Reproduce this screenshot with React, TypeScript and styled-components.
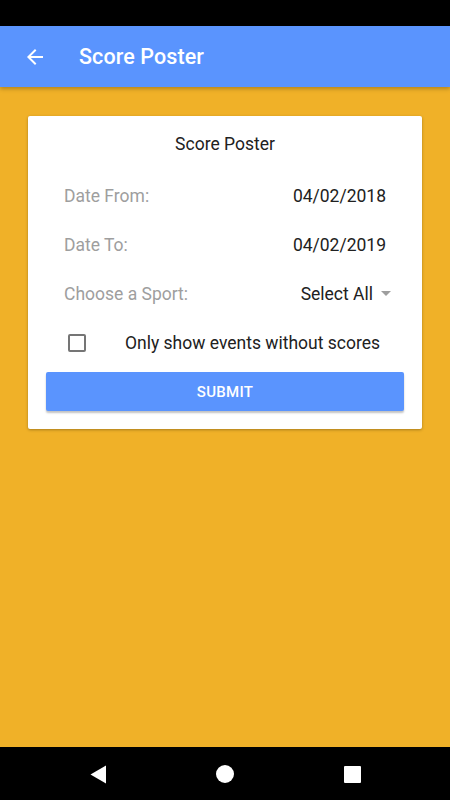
import React from 'react'
import styled, { createGlobalStyle } from 'styled-components'

const colors = {
  primary: '#5a94fe',
  background: '#f0b128',
  label: '#9e9e9e',
  text: '#212121',
  checkbox: '#757575'
}

const GlobalStyle = createGlobalStyle`
  html, body {
    margin: 0;
    padding: 0;
    background: #000;
  }
  body {
    font-family: Roboto, 'Noto Sans', sans-serif;
  }
`

export default function App() {
  return (
    <>
      <GlobalStyle />
      <Screen>
        <StatusBar />
        <AppBar>
          <BackButton aria-label="back">
            <svg width="24" height="24" viewBox="0 0 24 24">
              <path
                d="M20 11H7.83l5.59-5.59L12 4l-8 8 8 8 1.41-1.41L7.83 13H20v-2z"
                fill="#fff"
              />
            </svg>
          </BackButton>
          <AppBarTitle>Score Poster</AppBarTitle>
        </AppBar>
        <Content>
          <Card>
            <CardTitle>Score Poster</CardTitle>
            <FieldRow>
              <FieldLabel>Date From:</FieldLabel>
              <FieldValue>04/02/2018</FieldValue>
            </FieldRow>
            <FieldRow>
              <FieldLabel>Date To:</FieldLabel>
              <FieldValue>04/02/2019</FieldValue>
            </FieldRow>
            <FieldRow>
              <FieldLabel>Choose a Sport:</FieldLabel>
              <SelectValue>
                Select All
                <Caret />
              </SelectValue>
            </FieldRow>
            <CheckRow>
              <CheckBox />
              <CheckLabel>Only show events without scores</CheckLabel>
            </CheckRow>
            <SubmitButton>SUBMIT</SubmitButton>
          </Card>
        </Content>
        <NavBar>
          <NavSlot>
            <svg width="17" height="19" viewBox="0 0 17 19">
              <path d="M16 0.5 L16 18.5 L0.5 9.5 Z" fill="#fff" />
            </svg>
          </NavSlot>
          <NavSlot>
            <svg width="18" height="18" viewBox="0 0 18 18">
              <circle cx="9" cy="9" r="9" fill="#fff" />
            </svg>
          </NavSlot>
          <NavSlot>
            <svg width="17" height="17" viewBox="0 0 17 17">
              <rect x="0" y="0" width="17" height="17" rx="1" fill="#fff" />
            </svg>
          </NavSlot>
        </NavBar>
      </Screen>
    </>
  )
}

const Screen = styled.div`
  width: 450px;
  height: 800px;
  display: flex;
  flex-direction: column;
  background: ${colors.background};
  overflow: hidden;
`

const StatusBar = styled.div`
  height: 26px;
  flex-shrink: 0;
  background: #000;
`

const AppBar = styled.div`
  height: 61px;
  flex-shrink: 0;
  display: flex;
  align-items: center;
  background: ${colors.primary};
  box-shadow: 0 2px 4px rgba(0, 0, 0, 0.25);
  position: relative;
  z-index: 1;
`

const BackButton = styled.button`
  width: 24px;
  height: 24px;
  margin-left: 23px;
  padding: 0;
  border: none;
  background: none;
  display: flex;
  align-items: center;
  justify-content: center;
`

const AppBarTitle = styled.div`
  margin-left: 32px;
  color: #fff;
  font-size: 21.5px;
  font-weight: 500;
  letter-spacing: 0.1px;
`

const Content = styled.div`
  flex: 1;
  padding: 29px 28px 0;
`

const Card = styled.div`
  background: #fff;
  border-radius: 2px;
  box-shadow: 0 1px 3px rgba(0, 0, 0, 0.3);
  padding: 0 18px 18px;
  display: flex;
  flex-direction: column;
`

const CardTitle = styled.div`
  height: 55px;
  display: flex;
  align-items: center;
  justify-content: center;
  font-size: 17.5px;
  color: ${colors.text};
`

const FieldRow = styled.div`
  height: 49px;
  display: flex;
  align-items: center;
  justify-content: space-between;
  padding: 0 18px;
  font-size: 17.5px;
`

const FieldLabel = styled.span`
  color: ${colors.label};
`

const FieldValue = styled.span`
  color: ${colors.text};
`

const SelectValue = styled.span`
  display: flex;
  align-items: center;
  gap: 8px;
  color: ${colors.text};
  margin-right: -5px;
`

const Caret = styled.span`
  width: 0;
  height: 0;
  border-left: 5px solid transparent;
  border-right: 5px solid transparent;
  border-top: 5px solid ${colors.label};
`

const CheckRow = styled.div`
  height: 50px;
  display: flex;
  align-items: center;
  padding-left: 22px;
  font-size: 17.5px;
  color: ${colors.text};
`

const CheckBox = styled.span`
  width: 14px;
  height: 14px;
  border: 2px solid ${colors.checkbox};
  border-radius: 2px;
  flex-shrink: 0;
`

const CheckLabel = styled.span`
  margin-left: 39px;
`

const SubmitButton = styled.button`
  margin-top: 4px;
  height: 39px;
  border: none;
  border-radius: 2px;
  background: ${colors.primary};
  color: #fff;
  font-family: Roboto, sans-serif;
  font-size: 15px;
  font-weight: 500;
  letter-spacing: 0.3px;
  box-shadow: 0 2px 2px rgba(0, 0, 0, 0.24);
`

const NavBar = styled.div`
  height: 53px;
  flex-shrink: 0;
  background: #000;
  display: flex;
  align-items: center;
  justify-content: center;
  gap: 87px;
`

const NavSlot = styled.div`
  width: 40px;
  display: flex;
  justify-content: center;
  margin-top: 1px;
`
